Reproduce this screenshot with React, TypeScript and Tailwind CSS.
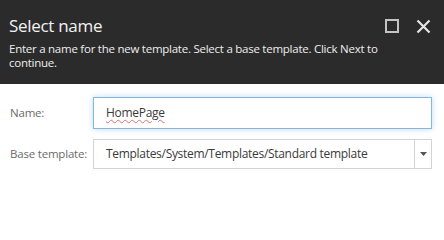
export default function App() {
  return (
    <div className="w-[444px] h-[224px] bg-white" style={{ fontFamily: '"Open Sans", "Noto Sans", sans-serif' }}>
      <div className="h-[84px] bg-[#2b2b2b] px-[9px] pt-[14px]">
        <div className="flex items-center justify-between">
          <h1 className="text-[17px] leading-[24px] tracking-[-0.3px] text-[#f2f2f2]">Select name</h1>
          <div className="flex items-center gap-[17px] pr-[4px]">
            <div className="w-[14px] h-[14px] border-2 border-[#c4c4c4]" />
            <svg width="15" height="15" viewBox="0 0 15 15">
              <path d="M1.5 1.5 L13.5 13.5 M13.5 1.5 L1.5 13.5" stroke="#e6e6e6" strokeWidth="2.2" />
            </svg>
          </div>
        </div>
        <p className="mt-[4px] text-[11.5px] leading-[14px] tracking-[-0.25px] text-[#eeeeee] pr-[50px]">
          Enter a name for the new template. Select a base template. Click Next to continue.
        </p>
      </div>

      <div className="px-[10px] pt-[13px] flex flex-col gap-[10px]">
        <div className="flex items-center">
          <label className="w-[83px] whitespace-nowrap text-[11.5px] tracking-[-0.2px] text-[#6b6b6b]">Name:</label>
          <div className="flex-1 h-[32px] border border-[#84b7e0] shadow-[0_0_6px_rgba(102,175,233,0.45)] flex items-center px-[12px] mr-[2px]">
            <span className="text-[12px] tracking-[-0.3px] text-[#3a3a3a] underline decoration-wavy decoration-[#e07070] decoration-1 underline-offset-[2px]">HomePage</span>
          </div>
        </div>
        <div className="flex items-center">
          <label className="w-[83px] whitespace-nowrap text-[11.5px] tracking-[-0.2px] text-[#6b6b6b]">Base template:</label>
          <div className="flex-1 h-[30px] border border-[#d4d4d4] flex items-center mr-[2px]">
            <span className="flex-1 whitespace-nowrap px-[12px] text-[12px] tracking-[-0.3px] text-[#3a3a3a]">Templates/System/Templates/Standard template</span>
            <div className="w-[17px] h-full border-l border-[#d4d4d4] flex items-center justify-center">
              <svg width="7" height="4" viewBox="0 0 7 4"><path d="M0 0 H7 L3.5 4 Z" fill="#555" /></svg>
            </div>
          </div>
        </div>
      </div>
    </div>
  );
}
